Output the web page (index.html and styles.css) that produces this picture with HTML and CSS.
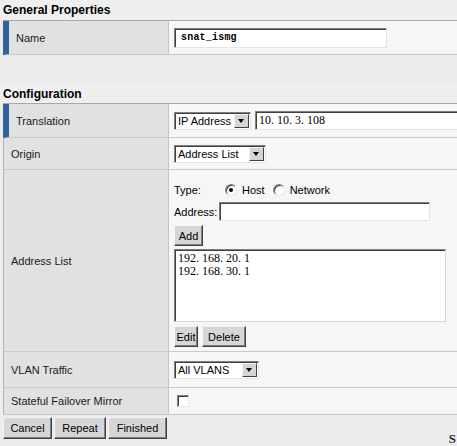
FILE: index.html
```html
<!DOCTYPE html>
<html lang="en">
<head>
  <meta charset="UTF-8">
  <title>SNAT Properties</title>
  <link rel="stylesheet" href="styles.css">
</head>
<body>
  <div class="section-title">General Properties</div>
  <table class="props">
    <tr class="marked">
      <td class="label">Name</td>
      <td class="value"><input class="text mono name-input" type="text" value="snat_ismg"></td>
    </tr>
  </table>

  <div class="spacer"></div>

  <div class="section-title">Configuration</div>
  <table class="props">
    <tr class="marked row-translation">
      <td class="label">Translation</td>
      <td class="value">
        <div class="inline">
          <div class="select sel-ip"><span class="sel-text">IP Address</span><span class="arrow"></span></div>
          <input class="text serif ip-input" type="text" value="10. 10. 3. 108">
        </div>
      </td>
    </tr>
    <tr class="row-origin">
      <td class="label">Origin</td>
      <td class="value">
        <div class="select sel-origin"><span class="sel-text">Address List</span><span class="arrow"></span></div>
      </td>
    </tr>
    <tr class="row-list">
      <td class="label">Address List</td>
      <td class="value list-cell">
        <div class="type-line">
          <span class="field-label type-label">Type:</span>
          <span class="radio checked"></span><span class="radio-text">Host</span>
          <span class="radio"></span><span class="radio-text">Network</span>
        </div>
        <div class="address-line">
          <span class="field-label">Address:</span>
          <input class="text address-input" type="text" value="">
        </div>
        <button class="btn btn-add">Add</button>
        <textarea class="serif address-box">192. 168. 20. 1
192. 168. 30. 1</textarea>
        <div class="btn-line">
          <button class="btn btn-edit">Edit</button>
          <button class="btn btn-delete">Delete</button>
        </div>
      </td>
    </tr>
    <tr class="row-vlan">
      <td class="label">VLAN Traffic</td>
      <td class="value">
        <div class="select sel-vlan"><span class="sel-text">All VLANS</span><span class="arrow"></span></div>
      </td>
    </tr>
    <tr class="row-mirror">
      <td class="label">Stateful Failover Mirror</td>
      <td class="value"><span class="check"></span></td>
    </tr>
  </table>

  <div class="actions">
    <button class="btn btn-cancel">Cancel</button>
    <button class="btn btn-repeat">Repeat</button>
    <button class="btn btn-finished">Finished</button>
    <span class="cut-off">S</span>
  </div>
</body>
</html>
```

FILE: styles.css
```css
/* Base page */
body {
  margin: 0;
  background-color: #ececec;
  font-family: "Liberation Sans", Arial, sans-serif;
  font-size: 11px;
  color: #111;
  overflow: hidden;
}

/* Section headers */
.section-title {
  height: 20px;
  line-height: 20px;
  padding-left: 3px;
  font-size: 12px;
  font-weight: bold;
  color: #000;
  background-color: #efefef;
}

.spacer {
  height: 30px;
}

.spacer + .section-title {
  height: 18px;
  line-height: 18px;
}

/* Property tables */
.props {
  border-collapse: separate;
  border-spacing: 0;
  margin-left: 3px;
  width: 454px;
  table-layout: fixed;
  border-top: 1px solid #a8a8a8;
}

.props td {
  box-sizing: border-box;
  padding: 0;
  border-bottom: 1px solid #c8c8c8;
  vertical-align: middle;
}

.label {
  width: 166px;
  padding-left: 7px !important;
  background-color: #e1e1e1;
  border-left: 1px solid #b4b4b4;
  border-right: 1px solid #c4c4c4;
  color: #1a1a1a;
}

.marked .label {
  border-left: 6px solid #31639a;
}

.value {
  padding-left: 5px !important;
  background-color: #f6f6f6;
}

.marked td { height: 34px; }
.row-origin td { height: 32px; }
.row-vlan td { height: 36px; }
.row-mirror td { height: 27px; }

/* Form controls */
.text {
  box-sizing: border-box;
  margin: 0;
  height: 20px;
  padding: 0 2px;
  border: 1px solid;
  border-color: #808080 #e4e4e4 #e4e4e4 #808080;
  box-shadow: inset 1px 1px #404040;
  background-color: #fff;
  font-family: "Liberation Sans", Arial, sans-serif;
  font-size: 11px;
  color: #000;
  outline: none;
}

.mono {
  font-family: "Liberation Mono", "Courier New", monospace;
  font-size: 10px;
  font-weight: bold;
  letter-spacing: 0.2px;
}

.serif {
  font-family: "Liberation Serif", "Times New Roman", serif;
  font-size: 12px;
}

.name-input {
  width: 213px;
  padding-left: 6px;
}

.inline {
  display: flex;
  align-items: center;
  gap: 4px;
  white-space: nowrap;
}

.ip-input {
  flex: none;
  width: 210px;
  height: 19px;
  padding-left: 3px;
  margin-right: -20px;
}

.select {
  box-sizing: border-box;
  display: inline-flex;
  align-items: center;
  height: 18px;
  border: 1px solid;
  border-color: #808080 #e4e4e4 #e4e4e4 #808080;
  box-shadow: inset 1px 1px #404040;
  background-color: #fff;
  vertical-align: middle;
}

.sel-text {
  flex: 1;
  padding-left: 3px;
  color: #000;
  white-space: nowrap;
}

.arrow {
  position: relative;
  box-sizing: border-box;
  width: 15px;
  height: 14px;
  margin-right: 1px;
  margin-top: 1px;
  background-color: #d4d4d4;
  border: 1px solid;
  border-color: #f4f4f4 #404040 #404040 #f4f4f4;
}

.arrow::after {
  content: "";
  position: absolute;
  left: 3px;
  top: 4px;
  border-left: 3.5px solid transparent;
  border-right: 3.5px solid transparent;
  border-top: 4px solid #000;
}

.sel-ip { width: 77px; }
.sel-origin { width: 92px; }
.sel-vlan { width: 85px; }

/* Address list block */
.list-cell {
  padding-top: 12px !important;
  padding-bottom: 4px !important;
}

.type-line {
  display: flex;
  align-items: center;
  height: 16px;
}

.field-label {
  color: #000;
}

.type-label {
  width: 51px;
}

.radio {
  position: relative;
  box-sizing: border-box;
  width: 12px;
  height: 12px;
  border-radius: 50%;
  border: 1px solid;
  border-color: #808080 #e8e8e8 #e8e8e8 #808080;
  box-shadow: inset 1px 1px #404040;
  background-color: #fff;
}

.radio.checked::after {
  content: "";
  position: absolute;
  left: 3px;
  top: 3px;
  width: 4px;
  height: 4px;
  border-radius: 50%;
  background-color: #000;
}

.radio-text {
  margin-left: 5px;
  margin-right: 8px;
  color: #000;
}

.address-line {
  display: flex;
  align-items: center;
  gap: 2px;
  margin-top: 4px;
}

.address-input {
  width: 211px;
  height: 19px;
}

.btn {
  box-sizing: border-box;
  height: 21px;
  margin: 0;
  padding: 0 5px;
  border: 1px solid;
  border-color: #f4f4f4 #404040 #404040 #f4f4f4;
  box-shadow: inset -1px -1px #808080;
  background-color: #d6d6d6;
  font-family: "Liberation Sans", Arial, sans-serif;
  font-size: 11px;
  color: #000;
  cursor: pointer;
}

.btn-add {
  display: block;
  width: 29px;
  padding: 0;
  margin-top: 4px;
}

.address-box {
  display: block;
  box-sizing: border-box;
  width: 272px;
  height: 73px;
  margin: 3px 0 0;
  padding: 2px 3px;
  border: 1px solid;
  border-color: #808080 #d8d8d8 #d8d8d8 #808080;
  box-shadow: inset 1px 1px #404040;
  background-color: #fff;
  line-height: 13px;
  color: #000;
  resize: none;
  overflow: hidden;
}

.btn-line {
  display: flex;
  gap: 4px;
  margin-top: 4px;
}

.btn-edit { width: 24px; padding: 0; }
.btn-delete { width: 44px; padding: 0; }

/* Checkbox */
.check {
  display: block;
  box-sizing: border-box;
  width: 12px;
  height: 12px;
  margin-left: 3px;
  border: 1px solid;
  border-color: #808080 #e8e8e8 #e8e8e8 #808080;
  box-shadow: inset 1px 1px #404040;
  background-color: #fff;
}

/* Bottom buttons */
.actions {
  display: flex;
  align-items: flex-start;
  gap: 2px;
  padding: 2px 0 0 3px;
  height: 29px;
}

.actions .btn {
  height: 22px;
  padding: 0;
}

.btn-cancel { width: 49px; }
.btn-repeat { width: 52px; }
.btn-finished { width: 59px; }

.cut-off {
  margin-left: auto;
  margin-top: 14px;
  margin-right: 1px;
  font-family: "Liberation Serif", "Times New Roman", serif;
  font-size: 13px;
  font-weight: bold;
  color: #222;
}
```
